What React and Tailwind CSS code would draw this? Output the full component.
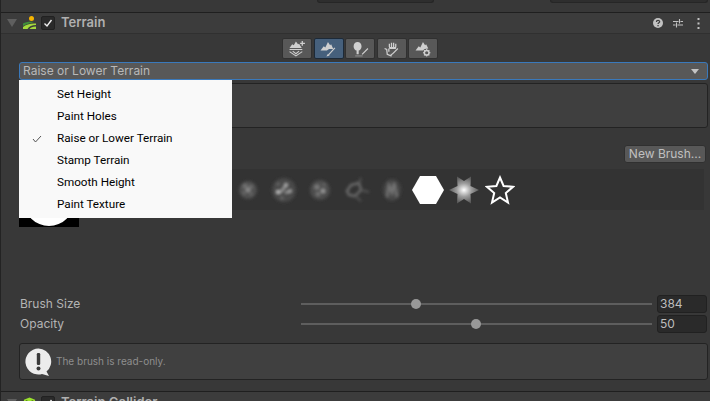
import React from 'react';

const MENU = ['Set Height', 'Paint Holes', 'Raise or Lower Terrain', 'Stamp Terrain', 'Smooth Height', 'Paint Texture'];

const TerrainIcon = () => (
  <svg width="13" height="14" viewBox="0 0 13 14">
    <circle cx="8.5" cy="2.5" r="2.5" fill="#f5b400" />
    <path d="M0 7.5 C3 5.8 7 5.2 11 6 L6 7.5 C4 8 2 9 0 10Z" fill="#3f8f3a" />
    <path d="M0 11 C3 8.5 8 7 13 7.5 L13 9 C9 9 6 10.5 4.5 13 L0 13Z" fill="#a4d93c" />
    <path d="M6.5 13 C7.5 11.5 9.5 10.5 13 10.5 L13 13Z" fill="#a4d93c" />
  </svg>
);

const ColliderIcon = () => (
  <svg width="13" height="14" viewBox="0 0 14 14">
    <path d="M7 1 L13 3.5 V10.5 L7 13 L1 10.5 V3.5Z" fill="#9be22d" />
    <path d="M3 4.5 L7 6 L11 4.5 M7 6 V10" stroke="#35520d" strokeWidth="1.2" fill="none" />
  </svg>
);

const Checkbox = () => (
  <div className="w-[14px] h-[14px] rounded-[2px] bg-[#2a2a2a] border border-[#212121] flex items-center justify-center">
    <svg width="10" height="10" viewBox="0 0 10 10">
      <path d="M1.5 5.5 L4 8 L8.5 2" stroke="#eeeeee" strokeWidth="1.4" fill="none" />
    </svg>
  </div>
);

const HeaderActions = () => (
  <div className="flex items-center">
    <svg width="10" height="10" viewBox="0 0 10 10">
      <circle cx="5" cy="5" r="5" fill="#c2c2c2" />
      <path d="M3.4 3.9 C3.4 1.9 6.7 1.9 6.7 3.7 C6.7 4.9 5 4.8 5 6.1" stroke="#3c3c3c" strokeWidth="1.2" fill="none" />
      <rect x="4.4" y="7" width="1.3" height="1.3" fill="#3c3c3c" />
    </svg>
    <svg width="10" height="10" viewBox="0 0 10 10" className="ml-[10px]">
      <path d="M0 3.5 H5.5 M7.5 3.5 H10 M6.5 1 V5.5 M0 7 H2.5 M4.5 7 H10 M3.5 4.5 V9.5" stroke="#c2c2c2" strokeWidth="1.1" fill="none" />
    </svg>
    <svg width="3" height="11" viewBox="0 0 3 11" className="ml-[14px]">
      <rect x="0.5" y="0" width="2" height="2" fill="#c2c2c2" />
      <rect x="0.5" y="4.5" width="2" height="2" fill="#c2c2c2" />
      <rect x="0.5" y="9" width="2" height="2" fill="#c2c2c2" />
    </svg>
  </div>
);

const ICON = '#cfcfcf';

const ToolIcons = [
  <svg key="0" width="17" height="16" viewBox="0 0 16 15">
    <path d="M0.5 6.5 L3 3 L4.5 4 L6.5 0.5 L8.5 3 L9.5 2.5 L12 6.5Z" fill={ICON} />
    <path d="M12.5 0 V4.5 M10.5 2.2 H15" stroke={ICON} strokeWidth="1.2" />
    <path d="M0.5 8 H12.5 M0.5 10 L6.5 14 L12.5 10 M3.5 9.5 L6.5 12 L9.5 9.5" stroke={ICON} strokeWidth="1" fill="none" />
  </svg>,
  <svg key="1" width="17" height="16" viewBox="0 0 16 15">
    <path d="M0.5 9 L3.5 5 L5 6 L7.5 1 L9.5 4 L10.5 3 L12.5 7.5 L8.5 7.5 L6.5 9Z" fill={ICON} />
    <path d="M8 13 L14 6.5" stroke={ICON} strokeWidth="1.1" />
    <path d="M6 14.5 L7.5 12 L9 13.5Z" fill={ICON} />
  </svg>,
  <svg key="2" width="17" height="16" viewBox="0 0 16 15">
    <path d="M1.5 5 C1.5 -0.5 9 -0.5 9 5 C9 7.5 7.5 9 6.3 9 L6.3 12.5 L4.3 12.5 L4.3 9 C3 9 1.5 7.5 1.5 5Z" fill={ICON} />
    <path d="M9.5 12.5 L15 7" stroke={ICON} strokeWidth="1.1" />
    <path d="M3 14 H10" stroke="#858585" strokeWidth="1.2" />
  </svg>,
  <svg key="3" width="17" height="16" viewBox="0 0 16 15">
    <path d="M1.5 7 L3.5 8 L4 12.5 L7.5 14 L8 12 M5.5 7 V10" stroke={ICON} strokeWidth="1.2" fill="none" />
    <path d="M6 5.5 V2.5 M8 5.5 V1.5 M10 5.5 V1.5 M12 5.5 V2.5" stroke={ICON} strokeWidth="1.2" />
    <path d="M5.5 5.5 H12.5 L12 7.5 H6Z" fill={ICON} />
    <path d="M8.5 12.5 L14 7" stroke={ICON} strokeWidth="1.1" />
  </svg>,
  <svg key="4" width="17" height="16" viewBox="0 0 16 15">
    <path d="M0.5 9 L3.5 5 L5 6 L7.5 1 L9.5 4 L10.5 3 L12.5 7 L9 7.5 L7.5 9Z" fill={ICON} />
    <circle cx="11" cy="11" r="2.2" fill="none" stroke={ICON} strokeWidth="1.4" />
    <path d="M11 7.5 V8.8 M11 13.2 V14.5 M7.5 11 H8.8 M13.2 11 H14.5 M8.5 8.5 L9.4 9.4 M13.5 8.5 L12.6 9.4 M8.5 13.5 L9.4 12.6 M13.5 13.5 L12.6 12.6" stroke={ICON} strokeWidth="1" />
  </svg>,
];

const Blob = ({ id, children }) => (
  <svg width="32" height="32" viewBox="0 0 32 32">
    <defs>
      <filter id={id} x="-30%" y="-30%" width="160%" height="160%">
        <feGaussianBlur stdDeviation="1.5" />
      </filter>
    </defs>
    <g filter={`url(#${id})`}>{children}</g>
  </svg>
);

const BrushCell = ({ children }) => (
  <div className="w-[36px] h-full shrink-0 flex items-center justify-center">{children}</div>
);

const Brushes = () => (
  <div className="flex items-center pl-[211px] h-full">
    <BrushCell>
      <Blob id="b1">
        <circle cx="16" cy="16" r="9" fill="#505050" />
        <circle cx="13" cy="12" r="2.6" fill="#6e6e6e" />
        <circle cx="19" cy="13" r="2.2" fill="#6a6a6a" />
        <circle cx="16" cy="16" r="2.4" fill="#8a8a8a" />
        <circle cx="12" cy="19" r="2" fill="#666666" />
        <circle cx="19" cy="20" r="2" fill="#626262" />
      </Blob>
    </BrushCell>
    <BrushCell>
      <Blob id="b2">
        <circle cx="16" cy="16" r="12" fill="#484848" />
        <path d="M10 18 C13 20 15 14 18 12 M17 18 C19 19 21 18 23 16" stroke="#989898" strokeWidth="2.4" fill="none" />
        <circle cx="10" cy="18" r="1.8" fill="#d0d0d0" />
        <circle cx="18" cy="11" r="1.8" fill="#b8b8b8" />
        <circle cx="22" cy="17" r="1.6" fill="#b0b0b0" />
        <circle cx="14" cy="24" r="1.6" fill="#707070" />
        <circle cx="10" cy="10" r="1.6" fill="#6c6c6c" />
      </Blob>
    </BrushCell>
    <BrushCell>
      <Blob id="b3">
        <circle cx="16" cy="16" r="10" fill="#4e4e4e" />
        <circle cx="19" cy="17" r="2.2" fill="#9c9c9c" />
        <circle cx="13" cy="13" r="2.6" fill="#7a7a7a" />
        <circle cx="14" cy="20" r="2.2" fill="#747474" />
        <circle cx="20" cy="11" r="1.8" fill="#666666" />
      </Blob>
    </BrushCell>
    <BrushCell>
      <Blob id="b4">
        <path d="M7 17 L11 11 L19 9 L21 16 L15 22 L9 21 Z" fill="none" stroke="#6c6c6c" strokeWidth="2.4" />
        <path d="M19 9 L21 4 M21 16 L29 18 M15 22 L21 27" fill="none" stroke="#545454" strokeWidth="2" />
      </Blob>
    </BrushCell>
    <BrushCell>
      <Blob id="b5">
        <ellipse cx="16" cy="16" rx="9" ry="11" fill="#464646" />
        <path d="M11 23 L13 11 L16 19 L18 9 L21 23" fill="none" stroke="#787878" strokeWidth="2" />
      </Blob>
    </BrushCell>
    <BrushCell>
      <svg width="32" height="28" viewBox="0 0 32 28">
        <path d="M0 14 L8 0 L24 0 L32 14 L24 28 L8 28Z" fill="#ffffff" />
      </svg>
    </BrushCell>
    <BrushCell>
      <svg width="30" height="28" viewBox="0 0 30 28">
        <defs>
          <radialGradient id="star">
            <stop offset="0" stopColor="#ffffff" />
            <stop offset="0.5" stopColor="#9c9c9c" />
            <stop offset="1" stopColor="#5a5a5a" />
          </radialGradient>
        </defs>
        <path d="M0 14 L8.5 10 L8 0.5 L15 5 L22 0.5 L21.5 10 L30 14 L21.5 18 L22 27.5 L15 23 L8 27.5 L8.5 18Z" fill="url(#star)" />
      </svg>
    </BrushCell>
    <BrushCell>
      <svg width="30" height="30" viewBox="0 0 30 30">
        <path d="M15 2.5 L18.6 11 L28 11.8 L20.8 18 L23 27.5 L15 22.5 L7 27.5 L9.2 18 L2 11.8 L11.4 11Z" fill="none" stroke="#ffffff" strokeWidth="2" />
      </svg>
    </BrushCell>
  </div>
);

const SliderRow = ({ label, pct, value }) => (
  <div className="flex items-center h-[18px] mb-[2px]">
    <div className="w-[281px] shrink-0">{label}</div>
    <div className="relative w-[351px] h-[2px] bg-[#5e5e5e]">
      <div className="absolute top-[-4px] w-[10px] h-[10px] rounded-full bg-[#999999]" style={{ left: pct }} />
    </div>
    <div className="ml-[5px] w-[50px] h-[18px] rounded-[3px] bg-[#2a2a2a] border border-[#212121] pl-[2px] leading-[16px] text-[#bdbdbd]">
      {value}
    </div>
  </div>
);

const ComponentHeader = ({ icon, title, children }) => (
  <div className="flex items-center pl-[6px] pr-[10px] h-full">
    <div className="w-0 h-0 border-x-[5px] border-x-transparent border-t-[8px] border-t-[#5f5f5f] mr-[6px]" />
    {icon}
    <div className="ml-[5px]"><Checkbox /></div>
    <div className="ml-[6px] font-semibold text-[13px] text-[#b0b0b0] grow">{title}</div>
    {children}
  </div>
);

export default function App() {
  return (
    <div className="relative w-[710px] h-[401px] overflow-hidden bg-[#383838] border-l border-[#232323] text-[12px] text-[#b4b4b4] font-['Inter',sans-serif]">
      {/* bits of the component above */}
      <div className="h-[12px] flex">
        <div className="ml-[316px] w-[117px] h-[3px] bg-[#2e2e2e] rounded-b-[3px] border border-t-0 border-[#262626]" />
        <div className="ml-[116px] w-[158px] h-[3px] bg-[#2e2e2e] rounded-b-[3px] border border-t-0 border-[#262626]" />
      </div>

      <div className="h-[22px] bg-[#3c3c3c] border-t border-b border-t-[#1f1f1f] border-b-[#303030]">
        <ComponentHeader icon={<TerrainIcon />} title="Terrain">
          <HeaderActions />
        </ComponentHeader>
      </div>

      <div className="mt-[4px] ml-[281px] flex gap-[1.5px] h-[21px] w-fit">
        {ToolIcons.map((icon, i) => (
          <div
            key={i}
            className={`w-[30px] h-[21px] flex items-center justify-center rounded-[2px] border ${
              i === 1 ? 'bg-[#46607c] border-[#1d2a38]' : 'bg-[#585858] border-[#303030]'
            }`}
          >
            {icon}
          </div>
        ))}
      </div>

      <div className="mt-[3px] ml-[18px] w-[689px] h-[18px] rounded-[3px] bg-[#585858] border border-[#3a79bb] flex items-center justify-between pl-[3px] pr-[8px] text-[#b8b8b8]">
        <span>Raise or Lower Terrain</span>
        <div className="w-0 h-0 border-x-[4px] border-x-transparent border-t-[5px] border-t-[#c4c4c4]" />
      </div>

      <div className="mt-[3px] ml-[18px] w-[689px] h-[45px] rounded-[3px] bg-[#3f3f3f] border border-[#232323]" />

      <div className="mt-[17px] ml-[623px] w-[82px] h-[18px] rounded-[3px] bg-[#585858] border border-[#303030] flex items-center justify-center text-[#c0c0c0]">
        New Brush...
      </div>

      <div className="mt-[6px] ml-[18px] w-[685px] h-[41px] bg-[#333333]">
        <Brushes />
      </div>

      <div className="ml-[18px] w-[60px] h-[17px] bg-black overflow-hidden relative">
        <div className="absolute left-[5px] bottom-[1px] w-[50px] h-[50px] rounded-full bg-white" />
      </div>

      <div className="mt-[68px] ml-[19px]">
        <SliderRow label="Brush Size" pct="110px" value="384" />
        <SliderRow label="Opacity" pct="170px" value="50" />
      </div>

      <div className="mt-[10px] ml-[18px] w-[689px] h-[37px] rounded-[3px] bg-[#404040] border border-[#232323] flex items-center pl-[5px] text-[10px] text-[#8e8e8e]">
        <svg width="27" height="28" viewBox="0 0 27 28" className="shrink-0">
          <path d="M13.5 0.5 A13 13 0 1 0 17 26 L24 28 L21.5 23.5 A13 13 0 0 0 13.5 0.5Z" fill="#ececec" />
          <rect x="11.8" y="5" width="3.4" height="12" rx="1.2" fill="#3a3a3a" />
          <circle cx="13.5" cy="20.5" r="2" fill="#3a3a3a" />
        </svg>
        <span className="ml-[4px]">The brush is read-only.</span>
      </div>

      <div className="mt-[11px] h-[22px] bg-[#3c3c3c] border-t border-[#1f1f1f]">
        <ComponentHeader icon={<ColliderIcon />} title="Terrain Collider" />
      </div>

      {/* open dropdown menu */}
      <div className="absolute left-[18px] top-[80px] w-[213px] h-[138px] bg-[#f9f9f9] py-[3px] text-[11.7px] text-black font-['Roboto',sans-serif]">
        {MENU.map((item) => (
          <div key={item} className="relative h-[22px] pl-[38px] leading-[22px]">
            {item === 'Raise or Lower Terrain' && (
              <svg width="10" height="8" viewBox="0 0 10 8" className="absolute left-[13px] top-[8px]">
                <path d="M1 4 L3.5 7 L9 1" stroke="#555555" strokeWidth="1" fill="none" />
              </svg>
            )}
            {item}
          </div>
        ))}
      </div>
    </div>
  );
}
